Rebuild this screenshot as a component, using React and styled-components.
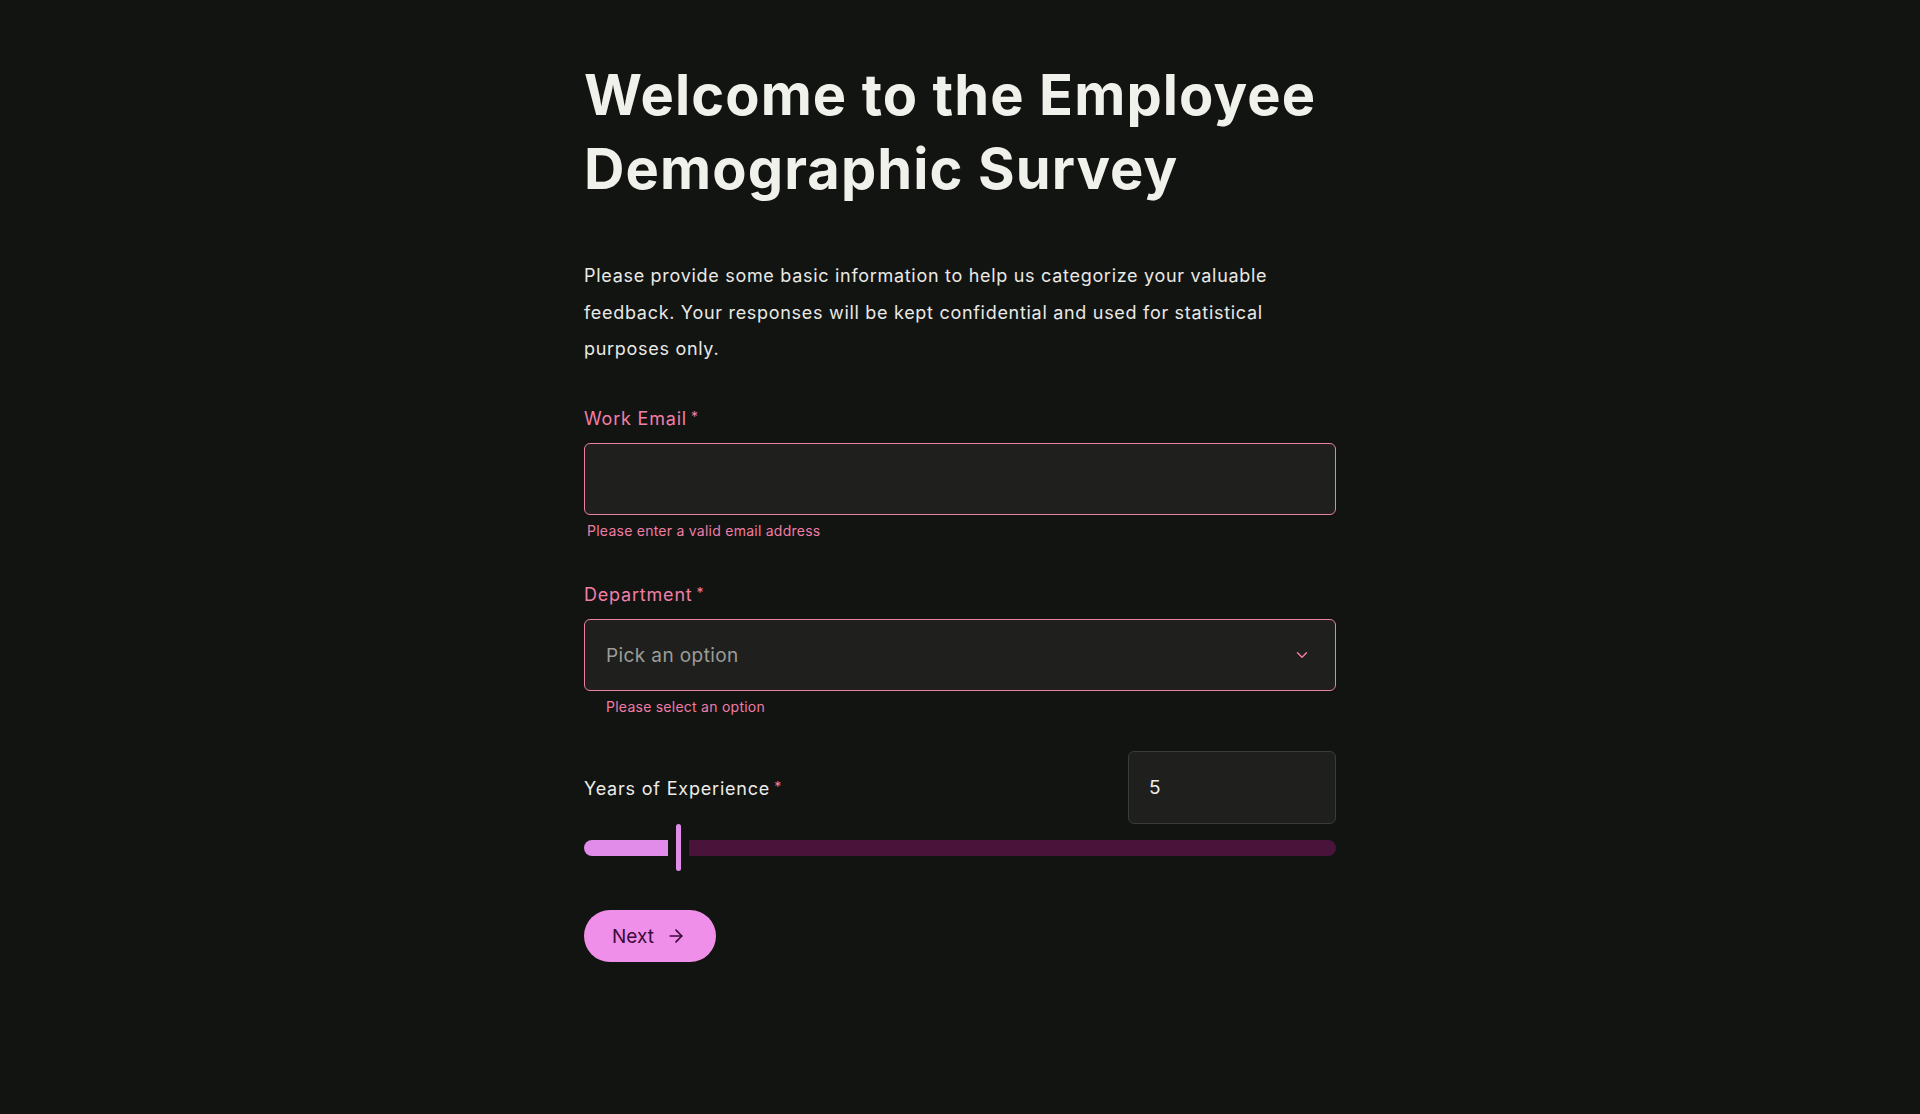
import React, { useState } from "react";
import styled, { createGlobalStyle } from "styled-components";
import { ChevronDown, ArrowRight } from "lucide-react";

const GlobalStyle = createGlobalStyle`
  html, body {
    margin: 0;
    padding: 0;
    background: #121412;
  }
  body {
    font-family: Inter, "Noto Sans", "Liberation Sans", sans-serif;
    color: #ecece8;
    -webkit-font-smoothing: antialiased;
  }
  * { box-sizing: border-box; }
`;

const Page = styled.main`
  min-height: 1114px;
  background: #121412;
  display: flex;
  justify-content: center;
  padding-top: 58px;
`;

const Form = styled.form`
  width: 752px;
  display: flex;
  flex-direction: column;
`;

const Title = styled.h1`
  margin: 0;
  font-size: 56px;
  line-height: 74px;
  font-weight: 700;
  letter-spacing: 1.1px;
  color: #f1f1ec;
`;

const Intro = styled.p`
  margin: 52px 0 0;
  font-size: 18px;
  line-height: 36.7px;
  letter-spacing: 0.7px;
  color: #e9e9e5;
`;

const Field = styled.div`
  display: flex;
  flex-direction: column;
  margin-top: ${(p) => p.$top}px;
`;

const Label = styled.label`
  font-size: 18px;
  line-height: 24px;
  letter-spacing: 0.8px;
  color: ${(p) => (p.$error ? "#f07fa8" : "#ecece8")};
  margin-bottom: ${(p) => p.$gap ?? 12}px;
`;

const Star = styled.span`
  color: #f07fa8;
  font-size: 14px;
  margin-left: 4px;
  vertical-align: 3px;
`;

const TextInput = styled.input`
  height: 72px;
  width: 100%;
  border-radius: 6px;
  border: 1.5px solid ${(p) => (p.$error ? "#ec7fa5" : "#3b3c3a")};
  background: #1f201e;
  color: #ecece8;
  font-family: inherit;
  font-size: 19px;
  padding: 0 22px;
  outline: none;
`;

const SelectBox = styled.button`
  height: 72px;
  width: 100%;
  border-radius: 6px;
  border: 1.5px solid #ec7fa5;
  background: #1f201e;
  display: flex;
  align-items: center;
  justify-content: space-between;
  padding: 0 24px 0 21px;
  font-family: inherit;
  font-size: 19px;
  letter-spacing: 0.4px;
  color: #9c9c98;
  cursor: pointer;
  text-align: left;
`;

const ErrorText = styled.div`
  margin-top: 6px;
  font-size: 14px;
  line-height: 20px;
  letter-spacing: 0.25px;
  color: #ef7ca5;
  padding-left: ${(p) => p.$indent}px;
`;

const ExperienceRow = styled.div`
  margin-top: 34px;
  display: flex;
  align-items: center;
  justify-content: space-between;
`;

const NumberInput = styled(TextInput)`
  width: 208px;
  height: 73px;
  padding: 0 20px;
`;

const Slider = styled.div`
  height: 47px;
  display: flex;
  align-items: center;
  gap: 8px;
`;

const TrackFill = styled.div`
  height: 16px;
  background: #e08ce8;
  border-radius: 8px 0 0 8px;
  flex: none;
`;

const Thumb = styled.div`
  width: 5px;
  height: 47px;
  border-radius: 3px;
  background: #e08ce8;
  flex: none;
`;

const TrackRest = styled.div`
  height: 16px;
  flex: 1;
  background: #4a1339;
  border-radius: 0 8px 8px 0;
`;

const NextButton = styled.button`
  margin-top: 39px;
  align-self: flex-start;
  height: 52px;
  padding: 0 30px 0 28px;
  border: none;
  border-radius: 26px;
  background: #f08fea;
  color: #3a0b38;
  font-family: inherit;
  font-size: 19px;
  display: flex;
  align-items: center;
  gap: 12px;
  cursor: pointer;
`;

export default function App() {
  const [years, setYears] = useState(5);
  const max = 40;
  const trackWidth = 752;
  const fillWidth = Math.round((years / max) * trackWidth) - 10;

  return (
    <>
      <GlobalStyle />
      <Page>
        <Form onSubmit={(e) => e.preventDefault()}>
          <Title>Welcome to the Employee Demographic Survey</Title>
          <Intro>
            Please provide some basic information to help us categorize your valuable
            feedback. Your responses will be kept confidential and used for statistical
            purposes only.
          </Intro>

          <Field $top={37}>
            <Label $error htmlFor="email">
              Work Email<Star>*</Star>
            </Label>
            <TextInput id="email" type="email" $error />
            <ErrorText $indent={3}>Please enter a valid email address</ErrorText>
          </Field>

          <Field $top={40}>
            <Label $error>
              Department<Star>*</Star>
            </Label>
            <SelectBox type="button">
              <span>Pick an option</span>
              <ChevronDown size={18} color="#ef7ca5" strokeWidth={2} />
            </SelectBox>
            <ErrorText $indent={22}>Please select an option</ErrorText>
          </Field>

          <ExperienceRow>
            <Label $gap={0}>
              Years of Experience<Star>*</Star>
            </Label>
            <NumberInput
              type="text"
              value={years}
              onChange={(e) => setYears(Number(e.target.value) || 0)}
            />
          </ExperienceRow>
          <Slider>
            <TrackFill style={{ width: fillWidth }} />
            <Thumb />
            <TrackRest />
          </Slider>

          <NextButton type="submit">
            Next
            <ArrowRight size={20} strokeWidth={2} />
          </NextButton>
        </Form>
      </Page>
    </>
  );
}
